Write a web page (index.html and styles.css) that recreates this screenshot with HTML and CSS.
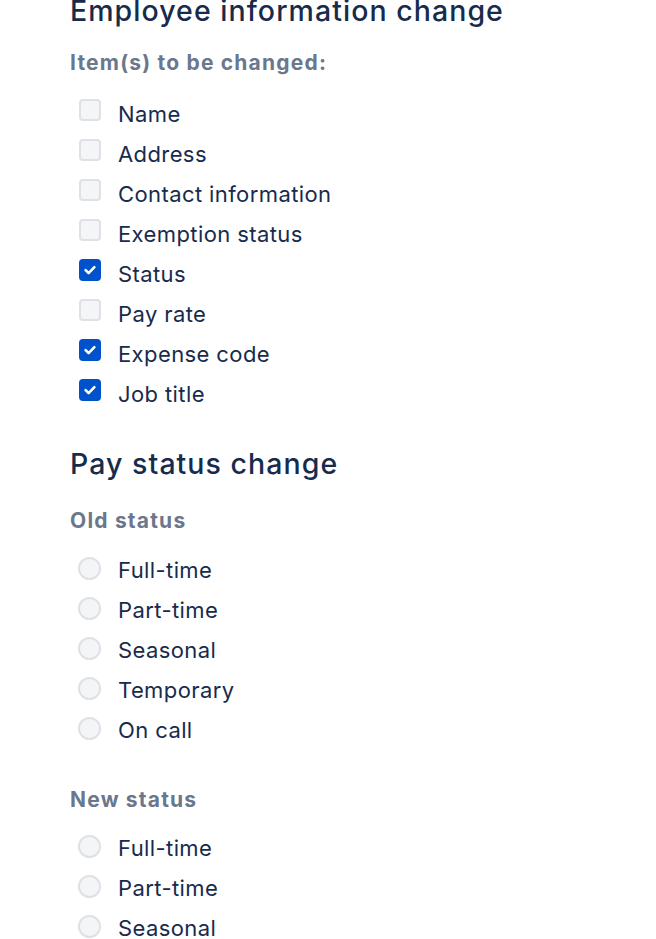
FILE: index.html
```html
<!DOCTYPE html>
<html lang="en">
<head>
<meta charset="utf-8">
<title>Employee information change</title>
<link rel="stylesheet" href="styles.css">
</head>
<body>
<main class="form">
  <section class="section section-first">
    <h1 class="title">Employee information change</h1>
    <fieldset class="field">
      <legend class="label">Item(s) to be changed:</legend>
      <ul class="options">
        <li class="option"><span class="box"></span><span class="text">Name</span></li>
        <li class="option"><span class="box"></span><span class="text">Address</span></li>
        <li class="option"><span class="box"></span><span class="text">Contact information</span></li>
        <li class="option"><span class="box"></span><span class="text">Exemption status</span></li>
        <li class="option"><span class="box checked"><svg viewBox="0 0 22 22" width="22" height="22"><path d="M6.6 11.2l3 3 5.8-6" fill="none" stroke="#fff" stroke-width="2.6" stroke-linecap="round" stroke-linejoin="round"/></svg></span><span class="text">Status</span></li>
        <li class="option"><span class="box"></span><span class="text">Pay rate</span></li>
        <li class="option"><span class="box checked"><svg viewBox="0 0 22 22" width="22" height="22"><path d="M6.6 11.2l3 3 5.8-6" fill="none" stroke="#fff" stroke-width="2.6" stroke-linecap="round" stroke-linejoin="round"/></svg></span><span class="text">Expense code</span></li>
        <li class="option"><span class="box checked"><svg viewBox="0 0 22 22" width="22" height="22"><path d="M6.6 11.2l3 3 5.8-6" fill="none" stroke="#fff" stroke-width="2.6" stroke-linecap="round" stroke-linejoin="round"/></svg></span><span class="text">Job title</span></li>
      </ul>
    </fieldset>
  </section>

  <section class="section section-second">
    <h1 class="title">Pay status change</h1>
    <fieldset class="field">
      <legend class="label">Old status</legend>
      <ul class="options">
        <li class="option"><span class="radio"></span><span class="text">Full-time</span></li>
        <li class="option"><span class="radio"></span><span class="text">Part-time</span></li>
        <li class="option"><span class="radio"></span><span class="text">Seasonal</span></li>
        <li class="option"><span class="radio"></span><span class="text">Temporary</span></li>
        <li class="option"><span class="radio"></span><span class="text">On call</span></li>
      </ul>
    </fieldset>
    <fieldset class="field field-next">
      <legend class="label">New status</legend>
      <ul class="options">
        <li class="option"><span class="radio"></span><span class="text">Full-time</span></li>
        <li class="option"><span class="radio"></span><span class="text">Part-time</span></li>
        <li class="option"><span class="radio"></span><span class="text">Seasonal</span></li>
      </ul>
    </fieldset>
  </section>
</main>
</body>
</html>
```

FILE: styles.css
```css
html, body {
  margin: 0;
  padding: 0;
  background: #ffffff;
}

body {
  font-family: Inter, "Noto Sans", "Liberation Sans", sans-serif;
  color: #172B4D;
  overflow: hidden;
}

.form {
  padding: 0 0 0 70px;
  margin-top: -5px;
}

.section-second {
  margin-top: 34px;
}

.title {
  margin: 0;
  font-size: 28.5px;
  line-height: 32px;
  font-weight: 500;
  color: #172B4D;
  letter-spacing: 1.05px;
}

.field {
  border: 0;
  margin: 0;
  padding: 0;
  min-width: 0;
}

.section-first .field {
  margin-top: 23px;
}

.section-second .field {
  margin-top: 28px;
}

.section-second .field-next {
  margin-top: 37px;
}

.label {
  padding: 0;
  font-size: 21px;
  line-height: 26px;
  font-weight: 700;
  color: #6B778C;
  letter-spacing: 1.2px;
}

.options {
  list-style: none;
  margin: 16px 0 0 0;
  padding: 0 0 0 9px;
}

.section-first .options {
  margin-top: 18px;
}

.field-next .options {
  margin-top: 15px;
}

.option {
  display: flex;
  align-items: flex-start;
  height: 40px;
}

.box,
.radio {
  flex: none;
  box-sizing: border-box;
  background: #F4F5F7;
  border: 2px solid #DFE1E6;
}

.box {
  width: 22px;
  height: 22px;
  margin-top: 5px;
  border-radius: 4px;
}

.box.checked {
  background: #0052CC;
  border-color: #0052CC;
}

.box svg {
  display: block;
  margin: -2px;
}

.radio {
  width: 23px;
  height: 23px;
  margin-top: 6.5px;
  margin-left: -1px;
  border-radius: 50%;
}

.text {
  margin-left: 17px;
  font-size: 22px;
  line-height: 40px;
  font-weight: 400;
  color: #172B4D;
  letter-spacing: 0.4px;
}
```
